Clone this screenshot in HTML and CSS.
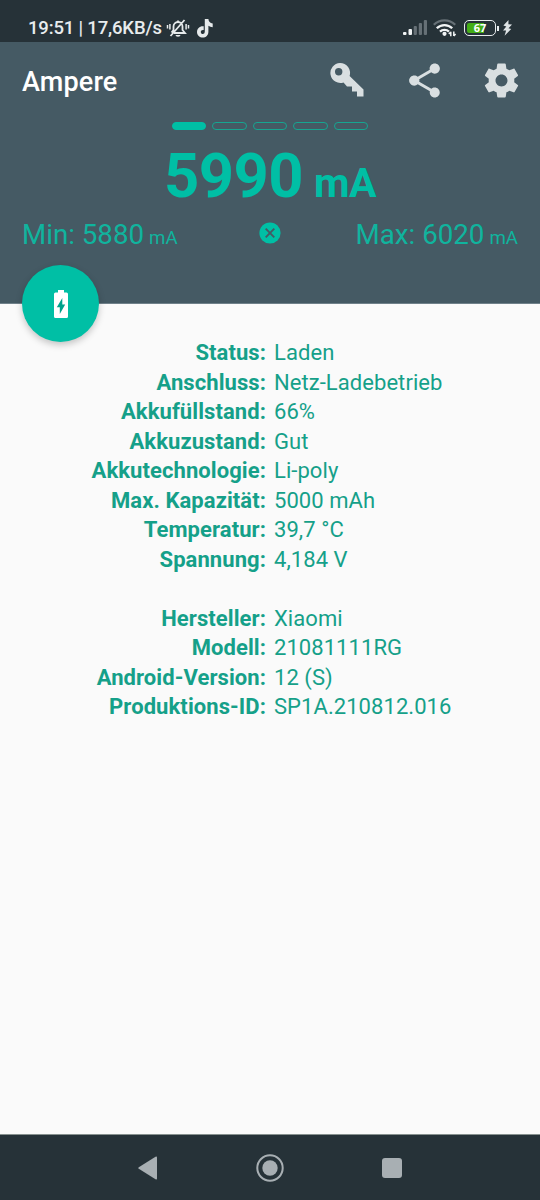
FILE: index.html
```html
<!DOCTYPE html>
<html lang="de">
<head>
<meta charset="utf-8">
<title>Ampere</title>
<link rel="stylesheet" href="styles.css">
</head>
<body>
<div class="screen">
  <div class="statusbar">
    <span class="clock">19:51 | 17,6KB/s</span>
    <svg class="bell" width="24" height="20" viewBox="0 0 24 20" fill="none" stroke="#e6eaeb" stroke-width="1.8">
      <path d="M5.500 14.500 7.500 12V8.500a4.500 4.500 0 0 1 9 0V12l2.500 3H8M12 4V2.500M4.500 18 18.500 2"/>
      <path d="M3.900 6v5.500M1.500 7v3.500M20.100 6v5.500M22.500 7v3.500" stroke-width="1.500"/>
      <path d="M9.500 17h5a2.500 1.800 0 0 1-5 0z" fill="#e6eaeb" stroke="none"/>
    </svg>
    <svg class="tiktok" width="16" height="19" viewBox="0 0 16 19" fill="#e6eaeb"><path d="M7.800 0h3.600c.2 2.500 1.700 4.300 4.300 4.500v3.700c-1.700 0-3.100-.5-4.300-1.400v5.900c0 3.500-2.500 5.800-5.600 5.800S0 16.100 0 12.900c0-3.500 3-6.200 6.700-5.600v3.700c-1.700-.4-2.900.5-2.900 1.900 0 1.200.9 2.100 2 2.100s2-.8 2-2.500z"/></svg>
    <svg class="signal" width="25" height="16" viewBox="0 0 25 16"><g fill="#f1f4f5"><rect x="0" y="12" width="3.500" height="3" rx="1"/><rect x="5.500" y="9" width="3.500" height="6" rx="1"/></g><g fill="#667076"><rect x="10.700" y="6" width="3.200" height="9" rx="1"/><rect x="15.800" y="3" width="3.200" height="12" rx="1"/><rect x="20.800" y="0" width="3.200" height="15" rx="1"/></g></svg>
    <svg class="wifi" width="24" height="18" viewBox="0 0 24 18" fill="none" stroke-width="2.300">
      <path d="M.8 5.800a15 15 0 0 1 21.400 0" stroke="#667076"/>
      <path d="M3.800 9.300a10.800 10.800 0 0 1 15.400 0M7 12.600a6.500 6.500 0 0 1 9 0" stroke="#f1f4f5"/>
      <circle cx="11.500" cy="14.800" r="2.100" fill="#f1f4f5"/>
      <path d="M17.800 12.800v4.500M20.800 12.500v4.500M15.800 15l2-2M20.800 17l1.800-2" stroke="#f1f4f5" stroke-width="1.500"/>
    </svg>
    <div class="battery"><span class="battery-fill"></span><span class="battery-text">67</span></div>
    <i class="battery-cap"></i>
    <svg class="bolt" width="9" height="16" viewBox="0 0 9 16" fill="#dfe4e6"><path d="M5.500 0 .4 5.500l2.900 1L0 10.400l3.100.2-1.500 5.200 6.600-6.700-2.700-.9L9 4.500l-3.600-.3z"/></svg>
  </div>

  <header class="header">
    <div class="toolbar">
      <h1 class="title">Ampere</h1>
      <svg class="key" width="34" height="34" viewBox="0 0 34 34" fill="#d9dfe1"><path fill-rule="evenodd" d="M10 0a10 10 0 0 1 9.600 13L33.500 26.500v7H27V28.500h-5V23.500h-5L13.500 19.500A10 10 0 1 1 10 0zM8.700 5a3.700 3.700 0 1 0 0 7.400 3.700 3.700 0 0 0 0-7.400z"/></svg>
      <svg class="share" width="41" height="41" viewBox="0 0 24 24" fill="#d9dfe1"><path d="M18 16.080c-.76 0-1.440.3-1.960.77L8.910 12.700c.05-.23.09-.46.09-.7s-.04-.47-.09-.7l7.050-4.110c.54.5 1.250.81 2.040.81 1.660 0 3-1.340 3-3s-1.340-3-3-3-3 1.340-3 3c0 .24.04.47.09.7L8.040 9.810C7.500 9.310 6.790 9 6 9c-1.660 0-3 1.340-3 3s1.340 3 3 3c.79 0 1.500-.31 2.040-.81l7.120 4.160c-.05.21-.08.43-.08.65 0 1.610 1.310 2.920 2.920 2.920s2.920-1.310 2.920-2.920-1.310-2.920-2.920-2.920z"/></svg>
      <svg class="gear" width="41" height="41" viewBox="0 0 24 24" fill="#d9dfe1"><path d="M19.430 12.980c.04-.32.07-.64.07-.98s-.03-.66-.07-.98l2.110-1.650c.19-.15.24-.42.12-.64l-2-3.460c-.12-.22-.39-.3-.61-.22l-2.490 1c-.52-.4-1.080-.73-1.690-.98l-.38-2.650C14.460 2.180 14.250 2 14 2h-4c-.25 0-.46.18-.49.42l-.38 2.650c-.61.25-1.170.59-1.690.98l-2.490-1c-.23-.09-.49 0-.61.22l-2 3.460c-.13.22-.07.49.12.64l2.110 1.650c-.04.32-.07.65-.07.98s.03.66.07.98l-2.110 1.650c-.19.15-.24.42-.12.64l2 3.460c.12.22.39.3.61.22l2.490-1c.52.4 1.080.73 1.690.98l.38 2.650c.03.24.24.42.49.42h4c.25 0 .46-.18.49-.42l.38-2.650c.61-.25 1.170-.59 1.690-.98l2.490 1c.23.09.49 0 .61-.22l2-3.460c.12-.22.07-.49-.12-.64l-2.110-1.650zM12 15.500c-1.930 0-3.500-1.570-3.500-3.500s1.570-3.500 3.500-3.500 3.500 1.570 3.500 3.500-1.570 3.500-3.500 3.500z"/></svg>
    </div>
    <div class="gauge"><i class="on"></i><i></i><i></i><i></i><i></i></div>
    <div class="current"><span>5990</span><span class="unit">mA</span></div>
    <div class="range">
      <div class="bound"><span>Min: 5880</span><span class="small">mA</span></div>
      <svg class="reset" width="22" height="22" viewBox="0 0 22 22"><circle cx="11" cy="11" r="10.600" fill="#00bfa5"/><path d="m6.700 6.700 8.600 8.600m0-8.600-8.600 8.600" stroke="#455a64" stroke-width="1.900"/></svg>
      <div class="bound max"><span>Max: 6020</span><span class="small">mA</span></div>
    </div>
    <div class="fab"><svg width="14" height="28" viewBox="0 0 14 28"><path d="M4 0h6v2.500h2.500Q14 2.500 14 4v22.500q0 1.500-1.500 1.500h-11Q0 28 0 26.500V4q0-1.500 1.500-1.500H4z" fill="#fff"/><path d="M8.300 8 2.800 17.300h3V24l5.400-9.500H8.300z" fill="#00a28c"/></svg></div>
  </header>

  <main class="details">
    <dl class="list">
      <dt>Status:</dt><dd>Laden</dd>
      <dt>Anschluss:</dt><dd>Netz-Ladebetrieb</dd>
      <dt>Akkufüllstand:</dt><dd>66%</dd>
      <dt>Akkuzustand:</dt><dd>Gut</dd>
      <dt>Akkutechnologie:</dt><dd>Li-poly</dd>
      <dt>Max. Kapazität:</dt><dd>5000 mAh</dd>
      <dt>Temperatur:</dt><dd>39,7 °C</dd>
      <dt>Spannung:</dt><dd>4,184 V</dd>
    </dl>
    <dl class="list">
      <dt>Hersteller:</dt><dd>Xiaomi</dd>
      <dt>Modell:</dt><dd>21081111RG</dd>
      <dt>Android-Version:</dt><dd>12 (S)</dd>
      <dt>Produktions-ID:</dt><dd>SP1A.210812.016</dd>
    </dl>
  </main>

  <nav class="navbar">
    <svg width="20" height="24" viewBox="0 0 20 24" fill="#a8afb3"><path d="M17.500.8Q19 0 19 1.500v21q0 1.500-1.500.7L.8 12.800Q-.3 12 .8 11.200z"/></svg>
    <svg width="28" height="28" viewBox="0 0 28 28"><circle cx="14" cy="14" r="12.700" fill="none" stroke="#a8afb3" stroke-width="2"/><circle cx="14" cy="14" r="7.700" fill="#a8afb3"/></svg>
    <i class="recent"></i>
  </nav>
</div>
</body>
</html>
```

FILE: styles.css
```css
* { box-sizing: border-box; }
body { margin: 0; font-family: Roboto, "Liberation Sans", sans-serif; }
svg { display: block; flex: none; }
.screen { width: 540px; height: 1200px; display: flex; flex-direction: column; background: #fafafa; overflow: hidden; }

.statusbar { height: 42px; flex: none; background: #263238; display: flex; align-items: center; padding: 14px 28px 0; color: #e8ecee; }
.clock { width: 138px; font-size: 18.500px; line-height: 22px; font-weight: 500; letter-spacing: -.17px; white-space: nowrap; }
.tiktok { margin-left: 7px; }
.signal { margin-left: auto; }
.wifi { margin-left: 5px; }
.battery { position: relative; width: 32px; height: 16px; margin-left: 7px; border: 1.500px solid #e8ecee; border-radius: 5px; display: flex; align-items: center; justify-content: center; }
.battery-fill { position: absolute; left: 2px; top: 2px; bottom: 2px; width: 17px; background: #43ad16; border-radius: 2px 0 0 2px; }
.battery-text { position: relative; font: 700 11px/12px "Noto Sans", sans-serif; color: #fff; }
.battery-cap { width: 2px; height: 5px; margin-left: 1px; background: #e8ecee; }
.bolt { margin: 0 0 0 4px; }

.header { position: relative; height: 262px; flex: none; background: #455a64; border-bottom: 1px solid #70818a; color: #00bfa5; }
.toolbar { height: 78px; display: flex; align-items: center; padding: 0 18px 0 22px; }
.title { margin: 2px auto 0 0; font-size: 27px; font-weight: 500; line-height: 32px; letter-spacing: .15px; color: #fff; }
.share { margin-left: 40px; }
.gear { margin-left: 36px; }
.toolbar svg { margin-bottom: 2px; }
.gauge { display: flex; gap: 6px; justify-content: center; margin-top: 2px; }
.gauge i { width: 34.500px; height: 8px; border: 1px solid #16a591; border-radius: 4px; }
.gauge .on { background: #00bfa5; border-color: #00bfa5; }
.current { display: flex; align-items: baseline; justify-content: center; gap: 11px; margin-top: 10px; font-size: 61.500px; line-height: 72px; font-weight: 700; letter-spacing: -.5px; }
.unit { font-size: 41px; }
.range { display: grid; grid-template-columns: 1fr 22px 1fr; align-items: center; padding: 0 22px; height: 34px; margin-top: -1px; color: #10b49e; }
.bound { display: flex; align-items: baseline; gap: 5px; font-size: 27.700px; line-height: 34px; white-space: nowrap; }
.max { justify-content: flex-end; }
.small { font-size: 18.700px; }
.reset { margin-bottom: 7px; }
.fab { position: absolute; left: 22px; bottom: -39px; width: 77px; height: 77px; border-radius: 50%; background: #00bfa5; display: flex; align-items: center; justify-content: center; box-shadow: 0 3px 7px rgba(0, 0, 0, .22); }

.details { flex: 1; padding-top: 34px; color: #15a089; }
.list { margin: 0 0 29.500px; display: grid; grid-template-columns: 266px 1fr; column-gap: 8px; grid-auto-rows: 29.500px; font-size: 22px; line-height: 29px; }
.list dt { text-align: right; font-weight: 700; letter-spacing: .08px; }
.list dd { margin: 0; letter-spacing: .06px; }

.navbar { height: 66px; flex: none; background: #263238; border-top: 1px solid #87918f; display: flex; align-items: center; justify-content: space-between; padding: 0 138px; }
.recent { width: 20px; height: 20px; background: #a8afb3; border-radius: 3px; }
```
